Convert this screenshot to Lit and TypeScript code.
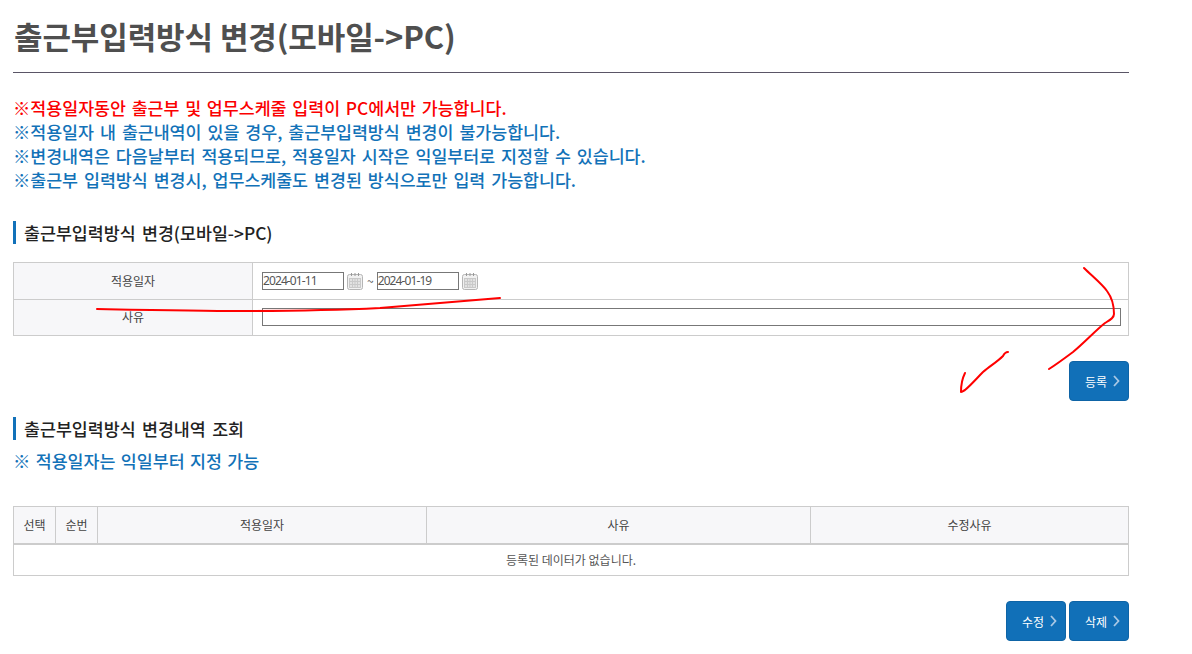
import { LitElement, html, css, svg } from "lit";
import { customElement } from "lit/decorators.js";

const calendar = svg`<svg class="cal" width="17" height="17" viewBox="0 0 17 17"><rect x="0.5" y="1.5" width="15" height="15" rx="2" fill="#f1f1f1" stroke="#b5b5b5"/><rect x="2.5" y="5.5" width="11" height="9" fill="#e2e2e2" stroke="#c9c9c9"/><path d="M2.5 8.5h11M2.5 11.5h11M5.5 5.5v9M8 5.5v9M10.5 5.5v9" stroke="#c9c9c9" fill="none"/><path d="M4.5 0v3M8 0v3M11.5 0v3" stroke="#999" fill="none"/></svg>`;
const chev = svg`<svg class="chev" width="7" height="12" viewBox="0 0 7 12"><path d="M1 1l4.5 5L1 11" fill="none" stroke="#a9c8e4" stroke-width="1.8"/></svg>`;

@customElement("app-root")
export class AppRoot extends LitElement {
  static styles = css`
    :host { display: block; position: relative; height: 654px; overflow: hidden; background: #fff;
      font-family: "Noto Sans CJK KR", "Noto Sans", sans-serif; color: #333; }
    .page { width: 1116px; margin-left: 13px; display: flex; flex-direction: column; }
    h1 { margin: 0; height: 73px; box-sizing: border-box; border-bottom: 1px solid #5a5566; padding: 14px 0 0 1px;
      font-size: 31px; line-height: 44px; font-weight: 700; color: #4f4f4f; letter-spacing: -0.1px; }
    .notes { margin: 23px 0 0; font-size: 17.33px; line-height: 24px; font-weight: 500; color: #1272b8; word-spacing: 2.2px; letter-spacing: -0.04px; }
    .notes div { white-space: nowrap; }
    .notes .red { color: #fb0000; word-spacing: 1.8px; letter-spacing: 0; }
    h2 { margin: 0; border-left: 3px solid #1271b9; padding-left: 8px; height: 23px; font-size: 17.33px; line-height: 23px;
      font-weight: 500; color: #222; word-spacing: 2.5px; }
    .h-a { margin-top: 29px; }
    table { border-collapse: collapse; table-layout: fixed; width: 1116px; font-size: 12px; }
    th, td { border: 1px solid #ccc; padding: 0; font-weight: 400; color: #444; text-align: center; }
    th { background: #f7f7f9; }
    .form { margin-top: 18px; }
    .form tr { height: 37px; }
    .form tr + tr { height: 36px; }
    .form th span { position: relative; top: -1px; }
    .form td { text-align: left; padding-left: 9px; }
    .dates { display: flex; align-items: center; font-size: 12px; }
    .date { box-sizing: border-box; width: 82px; height: 18px; border: 1px solid #777; font-size: 12px; line-height: 16px;
      padding-left: 0; color: #555; letter-spacing: -0.9px; font-family: "Noto Sans", sans-serif; }
    .cal { margin: 0 3px 0 3px; flex: none; }
    .tilde { margin-right: 3px; color: #555; position: relative; top: -1px; }
    .reason { box-sizing: border-box; width: 859px; height: 18px; border: 1px solid #777; display: block; margin-top: -1px; }
    .actions { display: flex; justify-content: flex-end; gap: 3px; }
    .btn { box-sizing: border-box; width: 60px; height: 40px; background: #1170b8; border: 1px solid #0e64a6; border-radius: 4px;
      color: #fff; font-size: 12px; display: flex; align-items: center; justify-content: center; gap: 6px; padding-left: 7px; }
    .a1 { margin-top: 25px; }
    .h-b { margin-top: 16px; }
    .sub { margin-top: 6px; height: 30px; font-size: 17.33px; line-height: 30px; color: #1272b8; font-weight: 500; word-spacing: 1.5px; }
    .list { margin-top: 30px; }
    .list thead tr { height: 37px; }
    .list th { border-bottom: 2px solid #ccc; }
    .list tbody tr { height: 32px; }
    .list td { font-size: 12px; color: #555; }
    .a2 { margin-top: 25px; }
    .ink { position: absolute; left: 0; top: 0; pointer-events: none; }
  `;

  render() {
    return html`
      <div class="page">
        <h1>출근부입력방식 변경(모바일-&gt;PC)</h1>
        <div class="notes">
          <div class="red">※적용일자동안 출근부 및 업무스케줄 입력이 PC에서만 가능합니다.</div>
          <div>※적용일자 내 출근내역이 있을 경우, 출근부입력방식 변경이 불가능합니다.</div>
          <div>※변경내역은 다음날부터 적용되므로, 적용일자 시작은 익일부터로 지정할 수 있습니다.</div>
          <div>※출근부 입력방식 변경시, 업무스케줄도 변경된 방식으로만 입력 가능합니다.</div>
        </div>
        <h2 class="h-a">출근부입력방식 변경(모바일-&gt;PC)</h2>
        <table class="form">
          <colgroup><col style="width:239px" /><col /></colgroup>
          <tr>
            <th><span>적용일자</span></th>
            <td><div class="dates">
              <span class="date">2024-01-11</span>${calendar}<span class="tilde">~</span><span class="date">2024-01-19</span>${calendar}
            </div></td>
          </tr>
          <tr>
            <th><span>사유</span></th>
            <td><span class="reason"></span></td>
          </tr>
        </table>
        <div class="actions a1"><div class="btn">등록${chev}</div></div>
        <h2 class="h-b">출근부입력방식 변경내역 조회</h2>
        <div class="sub">※ 적용일자는 익일부터 지정 가능</div>
        <table class="list">
          <colgroup><col style="width:42px" /><col style="width:42px" /><col style="width:329px" /><col style="width:384px" /><col /></colgroup>
          <thead><tr><th>선택</th><th>순번</th><th>적용일자</th><th>사유</th><th>수정사유</th></tr></thead>
          <tbody><tr><td colspan="5">등록된 데이터가 없습니다.</td></tr></tbody>
        </table>
        <div class="actions a2"><div class="btn">수정${chev}</div><div class="btn">삭제${chev}</div></div>
      </div>
      <svg class="ink" width="1192" height="654" viewBox="0 0 1192 654" fill="none" stroke="#f00" stroke-width="2" stroke-linecap="round" stroke-linejoin="round">
        <path d="M97 309C150 310 200 311 240 311C290 311 340 310 380 308C420 305 460 301 500 298" />
        <path d="M1084 268C1092 276 1102 284 1107 291C1113 299 1114 308 1114 314C1114 318 1110 320 1105 323C1095 331 1085 342 1073 352C1065 358 1057 364 1049 369" />
        <path d="M1008 352C1005 352 1004 354 1003 356C997 362 990 366 983 372C977 378 971 385 965 390C963 391 962 392 961 392C961 386 962 379 965 373" />
      </svg>
    `;
  }
}
